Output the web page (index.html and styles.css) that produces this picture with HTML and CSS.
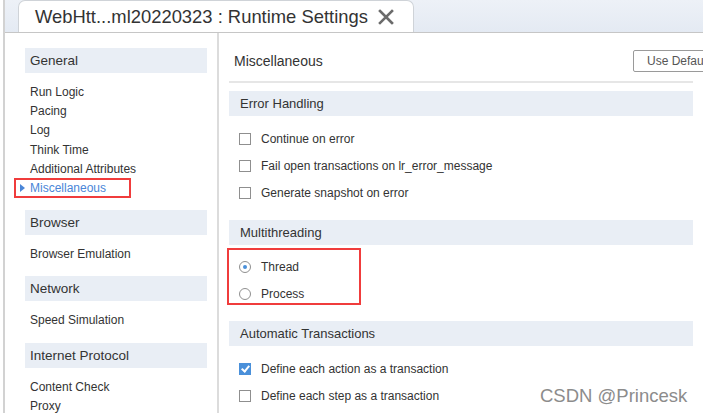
FILE: index.html
```html
<!DOCTYPE html>
<html lang="en">
<head>
    <meta charset="UTF-8">
    <title>Runtime Settings</title>
    <link rel="stylesheet" href="styles.css">
</head>
<body>
    <div class="frame">
        <div class="tabbar">
            <div class="tab">
                <span>WebHtt...ml20220323 : Runtime Settings</span>
                <svg class="tab-close" width="16" height="16" viewBox="0 0 16 16">
                    <path d="M2 2 L14 14 M14 2 L2 14" stroke="#6b6b6b" stroke-width="2.6" stroke-linecap="square"/>
                </svg>
            </div>
        </div>

        <div class="main">
            <div class="sidebar">
                <div class="group-title">General</div>
                <ul class="nav">
                    <li>Run Logic</li>
                    <li>Pacing</li>
                    <li>Log</li>
                    <li>Think Time</li>
                    <li>Additional Attributes</li>
                    <li class="active">Miscellaneous</li>
                </ul>
                <div class="group-title">Browser</div>
                <ul class="nav">
                    <li>Browser Emulation</li>
                </ul>
                <div class="group-title">Network</div>
                <ul class="nav">
                    <li>Speed Simulation</li>
                </ul>
                <div class="group-title">Internet Protocol</div>
                <ul class="nav">
                    <li>Content Check</li>
                    <li>Proxy</li>
                </ul>
            </div>

            <div class="content">
                <div class="page-head">
                    <h2>Miscellaneous</h2>
                    <button class="btn">Use Defaults</button>
                </div>

                <div class="section-title">Error Handling</div>
                <div class="options">
                    <div class="option"><span class="check"></span>Continue on error</div>
                    <div class="option"><span class="check"></span>Fail open transactions on lr_error_message</div>
                    <div class="option"><span class="check"></span>Generate snapshot on error</div>
                </div>

                <div class="section-title">Multithreading</div>
                <div class="options">
                    <div class="option"><span class="radio on"></span>Thread</div>
                    <div class="option"><span class="radio"></span>Process</div>
                </div>

                <div class="section-title">Automatic Transactions</div>
                <div class="options">
                    <div class="option"><span class="check on"></span>Define each action as a transaction</div>
                    <div class="option"><span class="check"></span>Define each step as a transaction</div>
                </div>
            </div>
        </div>
    </div>

    <!-- markierungen aus dem screenshot -->
    <div class="mark mark-misc"></div>
    <div class="mark mark-thread"></div>
    <div class="watermark">CSDN @Princesk</div>
</body>
</html>
```

FILE: styles.css
```css
body {
    font-family: "Liberation Sans", Arial, sans-serif;
    margin: 0;
    padding: 0;
    width: 703px;
    height: 413px;
    overflow: hidden;
    background: #fff;
    color: #333;
    position: relative;
}

.frame {
    margin-left: 3px;
    border-left: 2px solid #d2d2d2;
    height: 100%;
}

.tabbar {
    height: 32px;
    background: linear-gradient(#edf1f7, #e4eaf3);
    border-bottom: 1px solid #c6c6c6;
    padding-left: 13px;
    display: flex;
    align-items: flex-end;
}

.tab {
    width: 396px;
    height: 32px;
    box-sizing: border-box;
    background: #fff;
    border: 1px solid #cfd3d8;
    border-bottom: none;
    border-radius: 7px 7px 0 0;
    display: flex;
    align-items: center;
    padding-left: 16px;
    font-size: 18.4px;
    color: #333;
    margin-top: -2px;
}

.tab-close {
    margin-left: 10px;
}

.main {
    display: flex;
    height: 380px;
}

.sidebar {
    width: 182px;
    padding: 15px 10px 0 20px;
    border-right: 2px solid #dcdcdc;
    flex-shrink: 0;
}

.group-title {
    background: #e9eef5;
    height: 25px;
    line-height: 25px;
    padding-left: 5px;
    font-size: 13.5px;
}

.nav {
    list-style: none;
    margin: 10px 0 12px;
    padding: 0 0 0 5px;
}

.nav li {
    font-size: 12px;
    line-height: 19.2px;
    height: 19.2px;
}

.nav li.active {
    color: #4a86d8;
    position: relative;
}

.nav li.active::before {
    content: "";
    position: absolute;
    left: -10px;
    top: 5px;
    border-left: 5px solid #4a86d8;
    border-top: 4.5px solid transparent;
    border-bottom: 4.5px solid transparent;
}

.content {
    flex: 1;
    padding: 17px 0 0 10px;
    min-width: 0;
}

.page-head {
    display: flex;
    align-items: center;
    height: 22px;
    padding: 0 0 9px 5px;
    border-bottom: 2px solid #e6e6e6;
    width: 459px;
    margin-bottom: 8px;
}

.page-head h2 {
    flex: 1;
    font-size: 14px;
    font-weight: normal;
    margin: 0;
}

.btn {
    font-family: inherit;
    font-size: 12px;
    color: #555;
    background: #fff;
    border: 1px solid #9a9a9a;
    border-radius: 2px;
    height: 22px;
    width: 82px;
    text-align: left;
    padding-left: 13px;
    margin-right: -22px;
    flex-shrink: 0;
    white-space: nowrap;
}

.section-title {
    width: 453px;
    background: #e9eef5;
    height: 25px;
    line-height: 25px;
    padding-left: 11px;
    font-size: 13px;
}

.options {
    padding: 9px 0 13.5px 10px;
}

.option {
    display: flex;
    align-items: center;
    height: 27px;
    font-size: 12px;
}

.check {
    width: 10px;
    height: 10px;
    border: 1px solid #8f8f8f;
    background: #fff;
    margin-right: 10px;
    position: relative;
}

.check.on {
    background: #4a90da;
    border-color: #4a90da;
}

.check.on::after {
    content: "";
    position: absolute;
    left: 3px;
    top: 0px;
    width: 3px;
    height: 6px;
    border-right: 2px solid #fff;
    border-bottom: 2px solid #fff;
    transform: rotate(40deg);
}

.radio {
    width: 10px;
    height: 10px;
    border: 1px solid #8f8f8f;
    border-radius: 50%;
    margin-right: 10px;
    position: relative;
}

.radio.on::after {
    content: "";
    position: absolute;
    left: 3px;
    top: 3px;
    width: 4px;
    height: 4px;
    border-radius: 50%;
    background: #4a90da;
}

.mark {
    position: absolute;
    border: 2px solid #f03c3c;
}

.mark-misc {
    left: 14px;
    top: 178px;
    width: 113px;
    height: 16px;
}

.mark-thread {
    left: 227px;
    top: 248px;
    width: 130px;
    height: 53px;
}

.watermark {
    position: absolute;
    left: 540px;
    top: 385px;
    font-size: 18.5px;
    color: #8c8c8c;
    text-shadow: 0 0 1px #fff;
}
```
